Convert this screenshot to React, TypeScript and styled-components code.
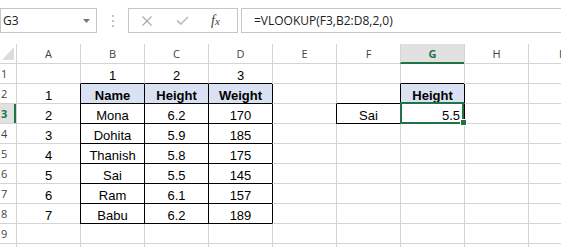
import React from 'react';
import styled, { createGlobalStyle } from 'styled-components';

const GRID = '#d4d4d4';
const GREEN = '#217346';
const HEAD_FILL = '#d9e1f2';

const GlobalStyle = createGlobalStyle`
  html, body {
    margin: 0;
    padding: 0;
    background: #fff;
    overflow: hidden;
  }
  body {
    font-family: "Open Sans", "Liberation Sans", sans-serif;
  }
`;

const Window = styled.div`
  width: 561px;
  height: 247px;
  overflow: hidden;
  background: #fff;
`;

const FormulaRow = styled.div`
  display: flex;
  align-items: stretch;
  height: 25px;
  margin: 8px 0 11px;
`;

const NameBox = styled.div`
  box-sizing: border-box;
  width: 97px;
  border: 1px solid #c6c6c6;
  display: flex;
  align-items: center;
  justify-content: space-between;
  padding: 0 6px 0 2px;
  font-size: 12px;
  color: #222;
`;

const Grip = styled.div`
  width: 31px;
  display: flex;
  align-items: center;
  justify-content: center;
`;

const FxBox = styled.div`
  box-sizing: border-box;
  width: 110px;
  border: 1px solid #c6c6c6;
  display: flex;
  align-items: center;
  padding-left: 13px;
  gap: 24px;
`;

const FxLabel = styled.span`
  font-family: "Liberation Serif", serif;
  font-style: italic;
  color: #444;
  font-size: 14px;
  margin-left: -2px;

  small {
    font-size: 11px;
  }
`;

const FormulaBar = styled.div`
  box-sizing: border-box;
  flex: 1;
  margin-left: 3px;
  border: 1px solid #c6c6c6;
  border-right: none;
  display: flex;
  align-items: center;
  padding-left: 12px;
  font-size: 12px;
  color: #222;
  white-space: nowrap;
`;

const Sheet = styled.div`
  display: grid;
  grid-template-columns: 16px repeat(9, 64px);
  grid-auto-rows: 20px;
`;

const Corner = styled.div`
  box-sizing: border-box;
  border-bottom: 1px solid ${GRID};
  display: flex;
  align-items: flex-end;
  padding: 0 0 3px 2px;
`;

const ColHead = styled.div<{ $selected?: boolean }>`
  box-sizing: border-box;
  border-left: 1px solid ${GRID};
  border-bottom: ${p => (p.$selected ? `2px solid ${GREEN}` : `1px solid ${GRID}`)};
  background: ${p => (p.$selected ? '#e1e1e1' : '#fff')};
  color: ${p => (p.$selected ? GREEN : '#444')};
  font-weight: ${p => (p.$selected ? 700 : 400)};
  font-size: 11px;
  display: flex;
  align-items: center;
  justify-content: center;
`;

const RowHead = styled.div<{ $selected?: boolean }>`
  box-sizing: border-box;
  border-bottom: 1px solid ${GRID};
  background: ${p => (p.$selected ? '#e1e1e1' : '#fff')};
  box-shadow: ${p => (p.$selected ? `inset -2px 0 0 ${GREEN}` : 'none')};
  color: ${p => (p.$selected ? GREEN : '#444')};
  font-weight: ${p => (p.$selected ? 700 : 400)};
  font-size: 11px;
  display: flex;
  align-items: center;
  padding-left: 1px;
`;

const Cell = styled.div<{
  $darkLeft: boolean;
  $darkBottom: boolean;
  $fill: boolean;
  $bold: boolean;
  $right: boolean;
}>`
  position: relative;
  box-sizing: border-box;
  border-left: 1px solid ${p => (p.$darkLeft ? '#000' : GRID)};
  border-bottom: 1px solid ${p => (p.$darkBottom ? '#000' : GRID)};
  background: ${p => (p.$fill ? HEAD_FILL : '#fff')};
  display: flex;
  align-items: flex-end;
  justify-content: ${p => (p.$right ? 'flex-end' : 'center')};
  padding: 0 ${p => (p.$right ? '4px' : '3px')} 0 3px;
  font-family: "Liberation Sans", Arial, sans-serif;
  font-size: 13px;
  line-height: 15px;
  font-weight: ${p => (p.$bold ? 700 : 400)};
  color: #000;
  white-space: nowrap;
`;

const Selection = styled.div`
  position: absolute;
  left: -1px;
  top: -2px;
  right: 0;
  bottom: -1px;
  box-sizing: border-box;
  border: 2px solid ${GREEN};
  z-index: 2;
  pointer-events: none;
`;

const FillHandle = styled.div`
  position: absolute;
  right: -3px;
  bottom: -3px;
  width: 7px;
  height: 7px;
  box-sizing: border-box;
  background: ${GREEN};
  border: 1px solid #fff;
  z-index: 3;
`;

const COLS = ['A', 'B', 'C', 'D', 'E', 'F', 'G', 'H', 'I'];
// row 10 only peeks in at the bottom edge, its label is below the fold
const ROWS = 10;
const LABELLED_ROWS = 9;

const people = [
  ['Mona', '6.2', '170'],
  ['Dohita', '5.9', '185'],
  ['Thanish', '5.8', '175'],
  ['Sai', '5.5', '145'],
  ['Ram', '6.1', '157'],
  ['Babu', '6.2', '189'],
];

// key = `${row}:${col}` with col 1 = A
const values: Record<string, string> = {
  '1:2': '1',
  '1:3': '2',
  '1:4': '3',
  '2:1': '1',
  '2:2': 'Name',
  '2:3': 'Height',
  '2:4': 'Weight',
  '2:7': 'Height',
  '3:6': 'Sai',
  '3:7': '5.5',
};
people.forEach((p, i) => {
  const r = i + 3;
  values[`${r}:1`] = String(i + 2);
  values[`${r}:2`] = p[0];
  values[`${r}:3`] = p[1];
  values[`${r}:4`] = p[2];
});

const isHeader = (r: number, c: number) => r === 2 && ((c >= 2 && c <= 4) || c === 7);
const isBoxed = (r: number, c: number) =>
  (r >= 2 && r <= 8 && c >= 2 && c <= 4) || (r === 2 && c === 7) || (r === 3 && (c === 6 || c === 7));

const SEL_ROW = 3;
const SEL_COL = 7;

export default function App() {
  return (
    <Window>
      <GlobalStyle />
      <FormulaRow>
        <NameBox>
          <span>G3</span>
          <svg width="7" height="4" viewBox="0 0 7 4">
            <path d="M0 0 H7 L3.5 4 Z" fill="#777" />
          </svg>
        </NameBox>
        <Grip>
          <svg width="2" height="12" viewBox="0 0 2 12">
            <rect x="0" y="0" width="2" height="2" fill="#c2c2c2" />
            <rect x="0" y="5" width="2" height="2" fill="#c2c2c2" />
            <rect x="0" y="10" width="2" height="2" fill="#c2c2c2" />
          </svg>
        </Grip>
        <FxBox>
          <svg width="10" height="10" viewBox="0 0 10 10">
            <path d="M0.5 0.5 L9.5 9.5 M9.5 0.5 L0.5 9.5" stroke="#a8a8a8" strokeWidth="1.1" fill="none" />
          </svg>
          <svg width="13" height="9" viewBox="0 0 13 9">
            <path d="M1 4.5 L4.8 8 L12 1" stroke="#bdbdbd" strokeWidth="1.7" fill="none" />
          </svg>
          <FxLabel>
            f<small>x</small>
          </FxLabel>
        </FxBox>
        <FormulaBar>=VLOOKUP(F3,B2:D8,2,0)</FormulaBar>
      </FormulaRow>

      <Sheet>
        <Corner>
          <svg width="12" height="13" viewBox="0 0 12 13">
            <path d="M0 13 H12 V0 Z" fill="#dcdcdc" />
          </svg>
        </Corner>
        {COLS.map((l, i) => (
          <ColHead key={l} $selected={i + 1 === SEL_COL}>
            {l}
          </ColHead>
        ))}
        {Array.from({ length: ROWS }, (_, ri) => {
          const r = ri + 1;
          return (
            <React.Fragment key={r}>
              <RowHead $selected={r === SEL_ROW}>{r <= LABELLED_ROWS ? r : ''}</RowHead>
              {COLS.map((_, ci) => {
                const c = ci + 1;
                const selected = r === SEL_ROW && c === SEL_COL;
                return (
                  <Cell
                    key={c}
                    $darkLeft={isBoxed(r, c) || isBoxed(r, c - 1)}
                    $darkBottom={isBoxed(r, c) || isBoxed(r + 1, c)}
                    $fill={isHeader(r, c)}
                    $bold={isHeader(r, c)}
                    $right={selected}
                  >
                    {values[`${r}:${c}`]}
                    {selected && (
                      <>
                        <Selection />
                        <FillHandle />
                      </>
                    )}
                  </Cell>
                );
              })}
            </React.Fragment>
          );
        })}
      </Sheet>
    </Window>
  );
}
